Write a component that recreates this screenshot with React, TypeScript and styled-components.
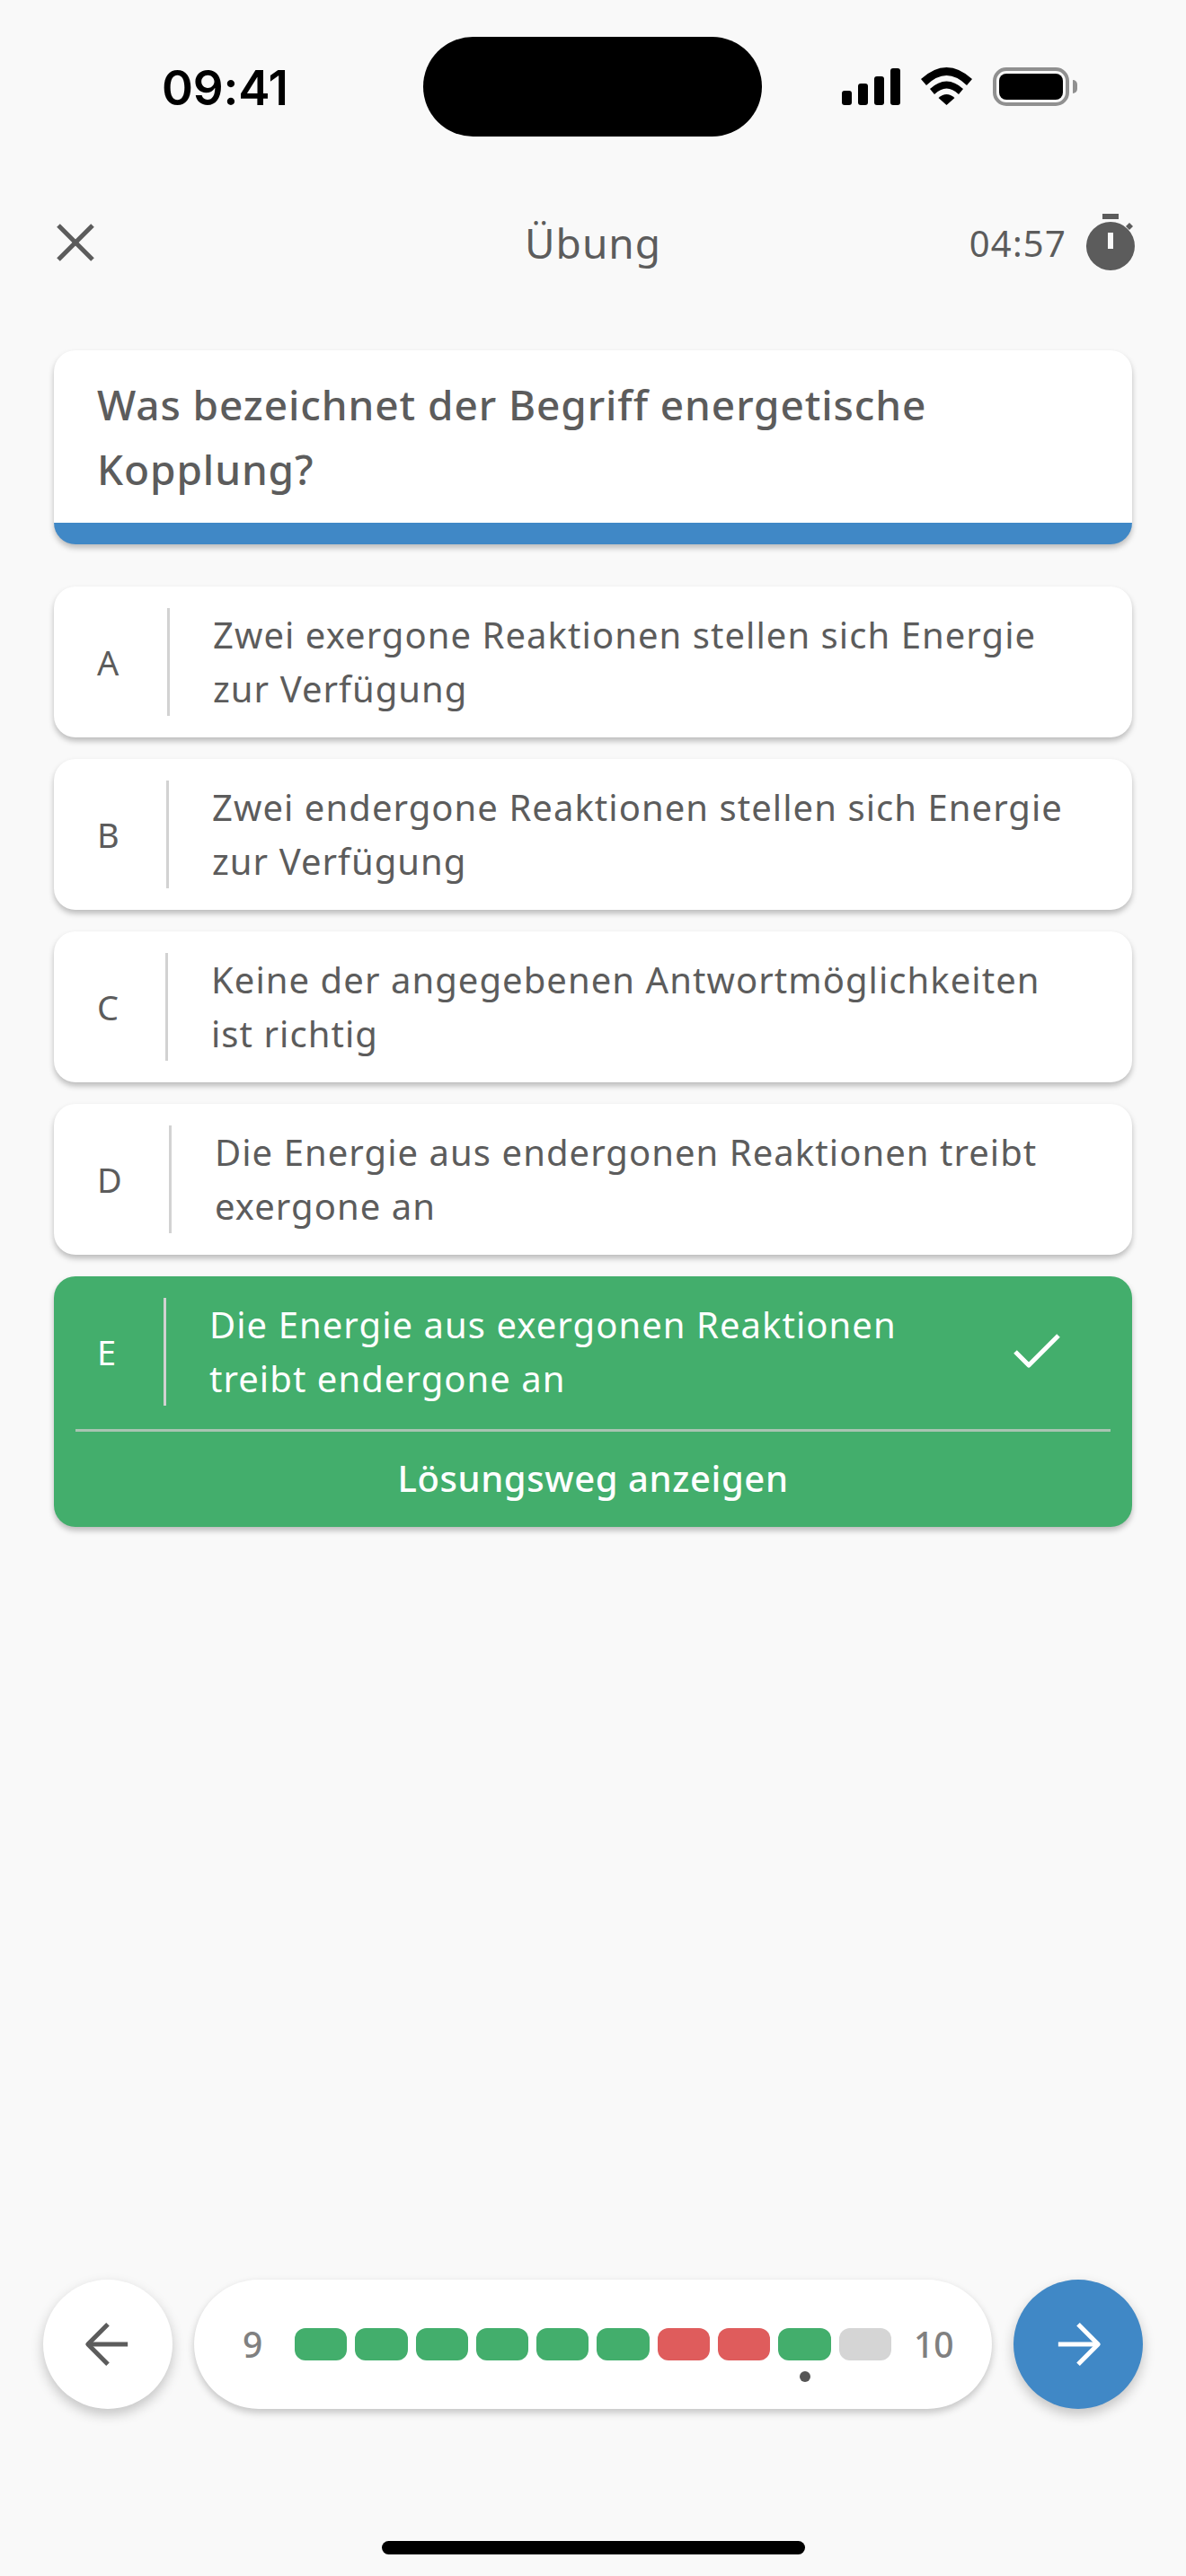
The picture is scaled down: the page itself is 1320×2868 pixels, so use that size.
import styled, { createGlobalStyle } from 'styled-components';
import { X, ArrowLeft, ArrowRight, Check } from 'lucide-react';

const GlobalStyle = createGlobalStyle`
  html, body {
    margin: 0;
    padding: 0;
    background: #f9f9f9;
  }
  * {
    box-sizing: border-box;
  }
`;

const Page = styled.div`
  width: 1320px;
  height: 2868px;
  display: flex;
  flex-direction: column;
  background: #f9f9f9;
  color: #5c5c5c;
  font-family: 'Noto Sans', 'Open Sans', sans-serif;
`;

const StatusBar = styled.div`
  display: grid;
  grid-template-columns: 471px 377px 1fr;
  padding-top: 41px;
  height: 152px;
`;

const Clock = styled.div`
  padding-left: 180px;
  padding-top: 25px;
  font-family: 'Inter', 'Liberation Sans', sans-serif;
  font-size: 53px;
  line-height: 64px;
  font-weight: 600;
  letter-spacing: -0.2px;
  color: #000;
`;

const Island = styled.div`
  height: 111px;
  border-radius: 56px;
  background: #000;
`;

const StatusIcons = styled.div`
  display: flex;
  align-items: flex-start;
  padding: 34px 0 0 89px;
`;

const Signal = styled.div`
  display: flex;
  align-items: flex-end;
  gap: 7px;
  height: 42px;
  margin-right: 23px;
`;

const SignalBar = styled.span<{ $h: number }>`
  width: 11px;
  height: ${(p) => p.$h}px;
  border-radius: 3px;
  background: #000;
`;

const Wifi = styled.svg`
  width: 57px;
  height: 42px;
  margin-right: 23px;
`;

const Battery = styled.div`
  width: 85px;
  height: 43px;
  padding: 3px;
  border: 4px solid #909090;
  border-radius: 15px;
  position: relative;

  &::after {
    content: '';
    position: absolute;
    right: -13px;
    top: 10px;
    width: 5px;
    height: 15px;
    border-radius: 0 8px 8px 0;
    background: #909090;
  }
`;

const BatteryFill = styled.div`
  height: 100%;
  border-radius: 8px;
  background: #000;
`;

const Header = styled.header`
  display: grid;
  grid-template-columns: 1fr auto 1fr;
  grid-template-rows: 68px;
  align-items: center;
  margin-top: 84px;
  padding: 0 57px;
`;

const CloseIcon = styled(X)`
  margin-left: -11px;
`;

const Title = styled.h1`
  margin: 0;
  font-size: 46px;
  line-height: 60px;
  font-weight: 400;
  letter-spacing: 1px;
`;

const Timer = styled.div`
  display: flex;
  justify-content: flex-end;
  align-items: center;
  gap: 22px;
  font-size: 40px;
  letter-spacing: 1.2px;
`;

const Content = styled.main`
  flex: 1;
  display: flex;
  flex-direction: column;
  padding: 0 60px;
  margin-top: 86px;
`;

const QuestionCard = styled.section`
  overflow: hidden;
  border-radius: 24px;
  background: #fff;
  box-shadow: 0 4px 6px rgba(0, 0, 0, 0.25);
  margin-bottom: 47px;
  border-bottom: 24px solid #4088c6;
`;

const Question = styled.h2`
  margin: 0;
  padding: 24px 48px;
  font-size: 46px;
  line-height: 72px;
  font-weight: 500;
  letter-spacing: 0.9px;
`;

const Answers = styled.div`
  display: flex;
  flex-direction: column;
  gap: 24px;
`;

const AnswerCard = styled.div<{ $correct?: boolean }>`
  border-radius: 24px;
  background: ${(p) => (p.$correct ? '#43ae6c' : '#fff')};
  color: ${(p) => (p.$correct ? '#fff' : '#5c5c5c')};
  box-shadow: 0 4px 6px rgba(0, 0, 0, 0.25);
`;

const AnswerRow = styled.div`
  display: flex;
  align-items: center;
  padding: 24px 0 24px 48px;
`;

const Letter = styled.div<{ $width: number }>`
  width: ${(p) => p.$width}px;
  font-size: 38px;
  line-height: 60px;
`;

const Divider = styled.div`
  width: 3px;
  height: 120px;
  margin-right: 48px;
  background: #d2d2d2;
`;

const AnswerText = styled.div`
  flex: 1;
  padding-right: 48px;
  font-size: 40px;
  line-height: 60px;
  letter-spacing: 1.05px;
`;

const Tick = styled.div`
  display: flex;
  padding-right: 70px;
`;

const Rule = styled.div`
  height: 3px;
  margin: 2px 24px 0;
  background: #a9c4b2;
`;

const SolutionLink = styled.div`
  padding: 26px 0 28px;
  text-align: center;
  font-size: 40px;
  line-height: 52px;
  font-weight: 500;
  letter-spacing: 0.6px;
`;

const BottomBar = styled.footer`
  display: flex;
  gap: 24px;
  padding: 0 48px;
`;

const RoundButton = styled.div<{ $primary?: boolean }>`
  flex: none;
  display: flex;
  align-items: center;
  justify-content: center;
  width: 144px;
  height: 144px;
  border-radius: 50%;
  background: ${(p) => (p.$primary ? '#4088c6' : '#fff')};
  color: ${(p) => (p.$primary ? '#fff' : '#5c5c5c')};
  box-shadow: 0 6px 14px rgba(0, 0, 0, 0.22);
`;

const ProgressPill = styled.div`
  flex: 1;
  display: flex;
  align-items: flex-start;
  height: 144px;
  padding: 54px 0 0 54px;
  border-radius: 72px;
  background: #fff;
  box-shadow: 0 4px 8px rgba(0, 0, 0, 0.22);
`;

const PageNumber = styled.div<{ $width: number }>`
  width: ${(p) => p.$width}px;
  font-size: 39px;
  line-height: 36px;
  font-weight: 500;
  color: #808080;
`;

const Segments = styled.div`
  display: flex;
  gap: 9px;
  width: 664px;
  margin-right: 25px;
`;

const Segment = styled.div<{ $color: string; $current?: boolean }>`
  flex: 1;
  height: 36px;
  border-radius: 12px;
  background: ${(p) => p.$color};
  position: relative;

  &::after {
    content: '';
    display: ${(p) => (p.$current ? 'block' : 'none')};
    position: absolute;
    left: 50%;
    top: 48px;
    width: 12px;
    height: 12px;
    margin-left: -6px;
    border-radius: 50%;
    background: #555;
  }
`;

const HomeIndicator = styled.div`
  width: 471px;
  height: 15px;
  margin: 147px auto 24px;
  border-radius: 8px;
  background: #000;
`;

const GREEN = '#43ae6c';
const RED = '#df5c5c';
const GREY = '#d5d5d5';

const answers = [
  { letter: 'A', width: 78, text: 'Zwei exergone Reaktionen stellen sich Energie zur Verfügung' },
  { letter: 'B', width: 77, text: 'Zwei endergone Reaktionen stellen sich Energie zur Verfügung' },
  { letter: 'C', width: 76, text: 'Keine der angegebenen Antwortmöglichkeiten ist richtig' },
  { letter: 'D', width: 80, text: 'Die Energie aus endergonen Reaktionen treibt exergone an' },
];

const progress = [GREEN, GREEN, GREEN, GREEN, GREEN, GREEN, RED, RED, GREEN, GREY];

export default function App() {
  return (
    <>
      <GlobalStyle />
      <Page>
        <StatusBar>
          <Clock>09:41</Clock>
          <Island />
          <StatusIcons>
            <Signal>
              <SignalBar $h={16} />
              <SignalBar $h={24} />
              <SignalBar $h={32} />
              <SignalBar $h={41} />
            </Signal>
            <Wifi viewBox='0 0 57 42'>
              <path d='M0 13Q28.5 -13 57 13L51 20Q28.5 -2 6 20Z' />
              <path d='M10 24Q28.5 7 47 24L42 30Q28.5 17 15 30Z' />
              <path d='M19.5 34Q28.5 26 37.5 34L28.5 42Z' />
            </Wifi>
            <Battery>
              <BatteryFill />
            </Battery>
          </StatusIcons>
        </StatusBar>

        <Header>
          <CloseIcon size={76} strokeWidth={1.6} strokeLinecap='butt' />
          <Title>Übung</Title>
          <Timer>
            04:57
            <svg width='54' height='64' viewBox='0 0 54 64' fill='#5c5c5c'>
              <rect x='18' y='0' width='18' height='6' />
              <path d='M44 14l4-4 4 4-4 4z' />
              <path
                fillRule='evenodd'
                d='M27 9a27 27 0 1 0 0 54 27 27 0 0 0 0-54zM24 21h6v18h-6z'
              />
            </svg>
          </Timer>
        </Header>

        <Content>
          <QuestionCard>
            <Question>Was bezeichnet der Begriff energetische Kopplung?</Question>
          </QuestionCard>
          <Answers>
            {answers.map((a) => (
              <AnswerCard key={a.letter}>
                <AnswerRow>
                  <Letter $width={a.width}>{a.letter}</Letter>
                  <Divider />
                  <AnswerText>{a.text}</AnswerText>
                </AnswerRow>
              </AnswerCard>
            ))}
            <AnswerCard $correct>
              <AnswerRow>
                <Letter $width={74}>E</Letter>
                <Divider />
                <AnswerText>Die Energie aus exergonen Reaktionen treibt endergone an</AnswerText>
                <Tick>
                  <Check size={72} strokeWidth={1.7} strokeLinecap='butt' />
                </Tick>
              </AnswerRow>
              <Rule />
              <SolutionLink>Lösungsweg anzeigen</SolutionLink>
            </AnswerCard>
          </Answers>
        </Content>

        <BottomBar>
          <RoundButton>
            <ArrowLeft size={76} strokeWidth={1.6} strokeLinecap='butt' />
          </RoundButton>
          <ProgressPill>
            <PageNumber $width={58}>9</PageNumber>
            <Segments>
              {progress.map((color, i) => (
                <Segment key={i} $color={color} $current={i === 8} />
              ))}
            </Segments>
            <PageNumber $width={50}>10</PageNumber>
          </ProgressPill>
          <RoundButton $primary>
            <ArrowRight size={76} strokeWidth={1.6} strokeLinecap='butt' />
          </RoundButton>
        </BottomBar>
        <HomeIndicator />
      </Page>
    </>
  );
}
